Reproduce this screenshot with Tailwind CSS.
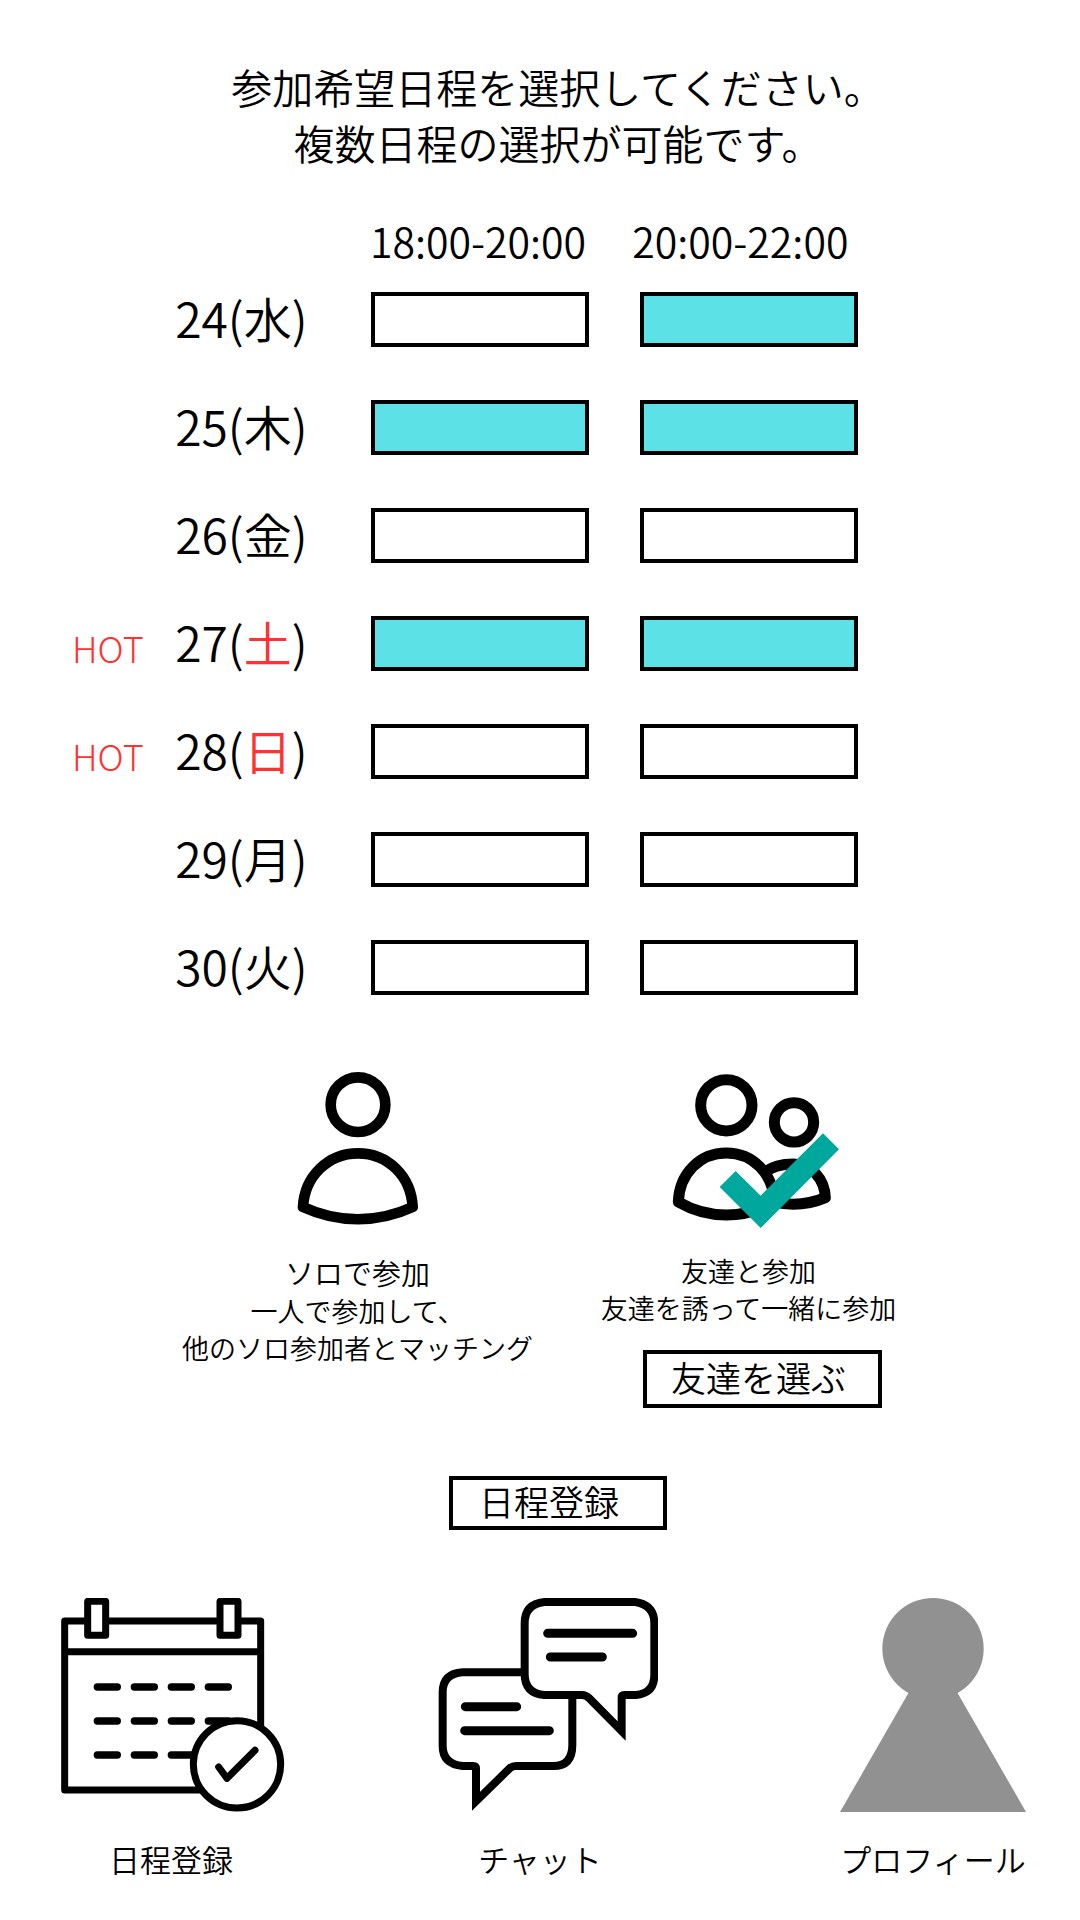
<!DOCTYPE html>
<html lang="ja">
<head>
<meta charset="utf-8">
<meta name="viewport" content="width=device-width, initial-scale=1">
<title>日程登録</title>
<script src="https://cdn.jsdelivr.net/npm/@tailwindcss/browser@4"></script>
</head>
<body class="min-h-screen bg-white text-black font-['Noto_Sans_CJK_JP',sans-serif] font-[350]">
<main class="pt-[58px]">
  <h1 class="pl-9 text-center text-[41px] leading-[56px] font-[350]">参加希望日程を選択してください。<br>複数日程の選択が可能です。</h1>

  <form>
    <div class="mt-[46px] flex justify-center pr-[124px]">
      <table class="table-fixed w-[812px]">
        <thead>
          <tr class="h-[49px] text-[41px] leading-[48px]">
            <td class="w-[103px]"></td>
            <td class="w-[170px]"></td>
            <th id="t1" scope="col" class="w-[269px] p-0 pr-1 align-top font-[350]">18:00-20:00</th>
            <th id="t2" scope="col" class="w-[269px] p-0 pr-[18px] align-top font-[350]">20:00-22:00</th>
          </tr>
        </thead>
        <tbody id="days"></tbody>
      </table>
    </div>

    <div class="mt-[49px] flex justify-center pl-[26px]">
      <button type="button" aria-pressed="false" class="flex w-[391px] flex-col items-center text-[27px] leading-[37px]">
        <svg class="h-40 w-40" viewBox="-8 60 480 480" fill="none" stroke="#000" stroke-width="32" stroke-linejoin="round" aria-hidden="true">
          <circle cx="232" cy="164" r="82"/>
          <path d="M67 471C72 378 143 310 232 310S391 378 396 471C290 520 173 520 67 471Z"/>
        </svg>
        <span class="mt-[22px] text-[29px] leading-10">ソロで参加</span>
        <span>一人で参加して、</span>
        <span>他のソロ参加者とマッチング</span>
      </button>
      <div class="flex w-[391px] flex-col items-center">
        <button type="button" aria-pressed="true" class="flex flex-col items-center text-[27px] leading-[37px]">
          <svg class="h-40 w-[220px]" viewBox="-33 60 660 480" fill="none" stroke="#000" stroke-width="33" stroke-linejoin="round" aria-hidden="true">
            <circle cx="229" cy="166" r="77"/>
            <circle cx="432" cy="217" r="59"/>
            <path d="M340 370C362 351 395 342 430 342C484 342 524 386 526 443C475 465 420 467 370 456"/>
            <path fill="#fff" d="M85 456C88 370 150 309 229 309S370 370 373 456C285 508 175 508 85 456Z"/>
            <path fill="#00a79d" stroke="none" d="M209 411L257 363L332 437L519 250L567 298L332 534Z"/>
          </svg>
          <span class="mt-[22px]">友達と参加</span>
          <span>友達を誘って一緒に参加</span>
        </button>
        <button type="button" class="mt-6 ml-7 h-[58px] w-[239px] border-4 border-black pr-2 pb-1 text-[35px] leading-[46px]">友達を選ぶ</button>
      </div>
    </div>

    <div class="mt-[68px] flex justify-center pl-9">
      <button type="submit" class="h-[54px] w-[218px] border-4 border-black pr-[18px] pb-1 text-[35px] leading-[42px]">日程登録</button>
    </div>
  </form>
</main>

<nav class="mt-[68px] flex justify-between pr-[54px] pb-9 pl-[61px] text-[31px] leading-[46px]">
  <a href="#schedule" class="flex flex-col items-center gap-6">
    <svg class="h-[214px] w-56" viewBox="63 54 672 642" fill="none" stroke="#000" stroke-width="21" stroke-linecap="round" stroke-linejoin="round" aria-hidden="true">
      <path d="M74 123H662V630H74ZM74 215H662"/>
      <path fill="#fff" d="M143 64H197V166H143ZM540 64H594V166H540Z"/>
      <path stroke-width="22" d="M172 321H232M283 321H343M394 321H454M505 321H565M172 423H232M283 423H343M394 423H454M505 423H565M172 525H232M283 525H343M394 525H454"/>
      <circle cx="591" cy="553" r="131" fill="#fff"/>
      <path d="M536 561L561 595L645 511"/>
    </svg>
    <span class="pr-1">日程登録</span>
  </a>
  <a href="#chat" class="mr-[29px] flex flex-col items-center gap-6">
    <svg class="h-[214px] w-[220px]" viewBox="54 54 660 642" fill="none" stroke="#000" stroke-width="24" aria-hidden="true">
      <path d="M128 277H397Q457 277 457 337V494Q457 558 400 558H288Q276 558 268 566L168 664V566Q168 558 160 558H128Q68 552 68 498V337Q68 281 128 277Z"/>
      <path fill="#fff" d="M373 66H645Q703 74 703 130V285Q703 340 648 345H613Q605 345 605 353V453L508 355Q498 345 486 345H373Q314 340 314 282V130Q314 72 373 66Z"/>
      <path stroke-width="27" stroke-linecap="round" d="M383 160H638M391 231H547M136 380H290M134 452H388"/>
    </svg>
    <span class="pr-4">チャット</span>
  </a>
  <a href="#profile" class="flex flex-col items-center gap-6">
    <svg class="h-[214px] w-[186px]" viewBox="90 54 558 642" fill="#919191" aria-hidden="true">
      <circle cx="369" cy="206" r="152"/>
      <path d="M369 211L648 696H90Z"/>
    </svg>
    <span>プロフィール</span>
  </a>
</nav>

<script>
  // [date, weekday, 18:00 slot selected, 20:00 slot selected, popular]
  const days = [
    [24, '水', 0, 1, 0], [25, '木', 1, 1, 0], [26, '金', 0, 0, 0], [27, '土', 1, 1, 1],
    [28, '日', 0, 0, 1], [29, '月', 0, 0, 0], [30, '火', 0, 0, 0],
  ];
  const slot = (d, t, on) => `<td class="p-0 text-center"><input type="checkbox" name="slot" value="${d}-${t}" aria-labelledby="d${d} t${t}" class="block mx-auto h-[55px] w-[218px] appearance-none border-4 border-black bg-white checked:bg-[#5ce1e6]"${on ? ' checked' : ''}></td>`;
  document.getElementById('days').innerHTML = days.map(([d, w, a, b, hot]) => `
    <tr class="h-[108px]">
      <td class="p-0 pt-2 text-4xl font-light text-[#ff3131]">${hot ? 'HOT' : ''}</td>
      <th id="d${d}" scope="row" class="p-0 pb-1 text-left text-5xl font-[350]">${d}(${hot ? `<span class="text-[#ff3131]">${w}</span>` : w})</th>
      ${slot(d, 1, a)}${slot(d, 2, b)}
    </tr>`).join('');
</script>
</body>
</html>
